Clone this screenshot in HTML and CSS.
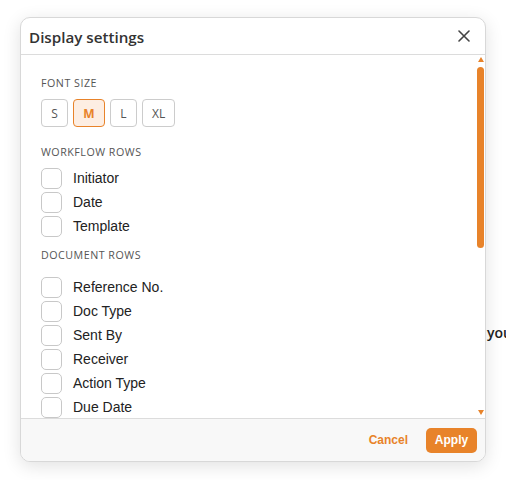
FILE: index.html
```html
<!DOCTYPE html>
<html>
<head>
<meta charset="utf-8">
<link rel="stylesheet" href="styles.css">
</head>
<body>
<div class="page">
  <p class="page-text">your documents will appear here</p>
</div>
<div class="modal">
  <div class="modal-header">
    <h2 class="modal-title">Display settings</h2>
    <button class="close-btn" aria-label="Close">
      <svg width="12" height="12" viewBox="0 0 12 12"><path d="M1 1L11 11M11 1L1 11" stroke="#444" stroke-width="1.6" stroke-linecap="round"/></svg>
    </button>
  </div>
  <div class="body-wrap">
    <div class="modal-body">
      <section class="group">
        <h3 class="group-label">Font size</h3>
        <div class="size-row">
          <button class="size-btn">S</button>
          <button class="size-btn active">M</button>
          <button class="size-btn">L</button>
          <button class="size-btn">XL</button>
        </div>
      </section>
      <section class="group">
        <h3 class="group-label">Workflow rows</h3>
        <label class="check-row"><span class="box"></span>Initiator</label>
        <label class="check-row"><span class="box"></span>Date</label>
        <label class="check-row"><span class="box"></span>Template</label>
      </section>
      <section class="group docs">
        <h3 class="group-label">Document rows</h3>
        <label class="check-row"><span class="box"></span>Reference No.</label>
        <label class="check-row"><span class="box"></span>Doc Type</label>
        <label class="check-row"><span class="box"></span>Sent By</label>
        <label class="check-row"><span class="box"></span>Receiver</label>
        <label class="check-row"><span class="box"></span>Action Type</label>
        <label class="check-row"><span class="box"></span>Due Date</label>
        <label class="check-row"><span class="box"></span>Status</label>
        <label class="check-row"><span class="box"></span>Subject</label>
        <label class="check-row"><span class="box"></span>Remarks</label>
      </section>
    </div>
    <div class="scrollbar" aria-hidden="true">
      <span class="arrow up"></span>
      <span class="thumb"></span>
      <span class="arrow down"></span>
    </div>
  </div>
  <div class="modal-footer">
    <button class="btn-cancel">Cancel</button>
    <button class="btn-apply">Apply</button>
  </div>
</div>
</body>
</html>
```
FILE: styles.css
```css
html, body {
  margin: 0;
  padding: 0;
  background: #fff;
  overflow: hidden;
  width: 506px;
  height: 480px;
}
.page {
  padding-top: 323px;
  padding-left: 487px;
  width: 19px;
  overflow: hidden;
}
.page-text {
  margin: 0;
  white-space: nowrap;
  font-family: "Open Sans", sans-serif;
  font-size: 14px;
  font-weight: 600;
  color: #222;
  line-height: 20px;
}
.modal {
  position: absolute;
  left: 20px;
  top: 17px;
  width: 466px;
  height: 445px;
  box-sizing: border-box;
  background: #fff;
  border: 1px solid #d8d8d8;
  border-radius: 10px;
  box-shadow: 0 4px 18px rgba(0,0,0,0.12);
  display: flex;
  flex-direction: column;
  overflow: hidden;
}
.modal-header {
  height: 36px;
  flex: none;
  display: flex;
  align-items: center;
  justify-content: space-between;
  padding: 0 15px 0 8px;
  border-bottom: 1px solid #dcdcdc;
}
.modal-title {
  margin: 0;
  padding-top: 1px;
  font-family: "Open Sans", sans-serif;
  font-weight: 600;
  font-size: 15.2px;
  color: #333;
}
.close-btn {
  border: 0;
  background: none;
  padding: 0;
  width: 12px;
  height: 12px;
  display: flex;
}
.body-wrap {
  flex: 1;
  position: relative;
  overflow: hidden;
  display: flex;
}
.modal-body {
  flex: 1;
  overflow: hidden;
  padding: 21px 20px 0 20px;
}
.scrollbar {
  position: absolute;
  top: 0;
  right: 1px;
  bottom: 0;
  width: 7px;
  display: flex;
  flex-direction: column;
  align-items: center;
  padding: 2px 0 3px;
  box-sizing: border-box;
}
.arrow {
  width: 0;
  height: 0;
  border-left: 3px solid transparent;
  border-right: 3px solid transparent;
}
.arrow.up {
  border-bottom: 5px solid #e8832a;
}
.arrow.down {
  border-top: 5px solid #e8832a;
  margin-top: auto;
}
.thumb {
  margin-top: 5px;
  width: 7px;
  height: 181px;
  border-radius: 4px;
  background: #e8832a;
}
.group {
  margin-bottom: 10px;
}
.group-label {
  margin: 0 0 7px 0;
  font-family: "Open Sans", sans-serif;
  font-size: 10.7px;
  font-weight: 400;
  letter-spacing: 0.5px;
  text-transform: uppercase;
  color: #555;
  line-height: 14px;
}
.size-row {
  display: flex;
  gap: 5px;
  padding-top: 2px;
  padding-bottom: 8px;
}
.docs .group-label {
  margin-bottom: 13px;
}
.size-btn {
  height: 28px;
  min-width: 27px;
  padding: 0 9px;
  box-sizing: border-box;
  border: 1px solid #ccc;
  border-radius: 4px;
  background: #fff;
  font-family: "Open Sans", sans-serif;
  font-size: 12px;
  color: #555;
}
.size-btn.active {
  background: #fdeee3;
  border-color: #e8832a;
  color: #e8832a;
  font-weight: 700;
  min-width: 32px;
}
.check-row {
  display: flex;
  align-items: center;
  gap: 11px;
  height: 24px;
  font-family: "Liberation Sans", Arial, sans-serif;
  font-size: 14px;
  color: #222;
}
.box {
  width: 19px;
  height: 19px;
  border: 1px solid #c8c8c8;
  border-radius: 5px;
  background: #fff;
  flex: none;
}
.modal-footer {
  height: 42px;
  flex: none;
  background: #f8f8f8;
  border-top: 1px solid #dcdcdc;
  display: flex;
  align-items: center;
  justify-content: flex-end;
  gap: 18px;
  padding-right: 8px;
}
.btn-cancel {
  border: 0;
  background: none;
  padding: 0;
  font-family: "Liberation Sans", Arial, sans-serif;
  font-weight: 700;
  font-size: 12px;
  color: #e8832a;
}
.btn-apply {
  border: 0;
  background: #e8832a;
  color: #fff;
  border-radius: 5px;
  height: 25px;
  width: 51px;
  font-family: "Liberation Sans", Arial, sans-serif;
  font-weight: 700;
  font-size: 12px;
}
```
